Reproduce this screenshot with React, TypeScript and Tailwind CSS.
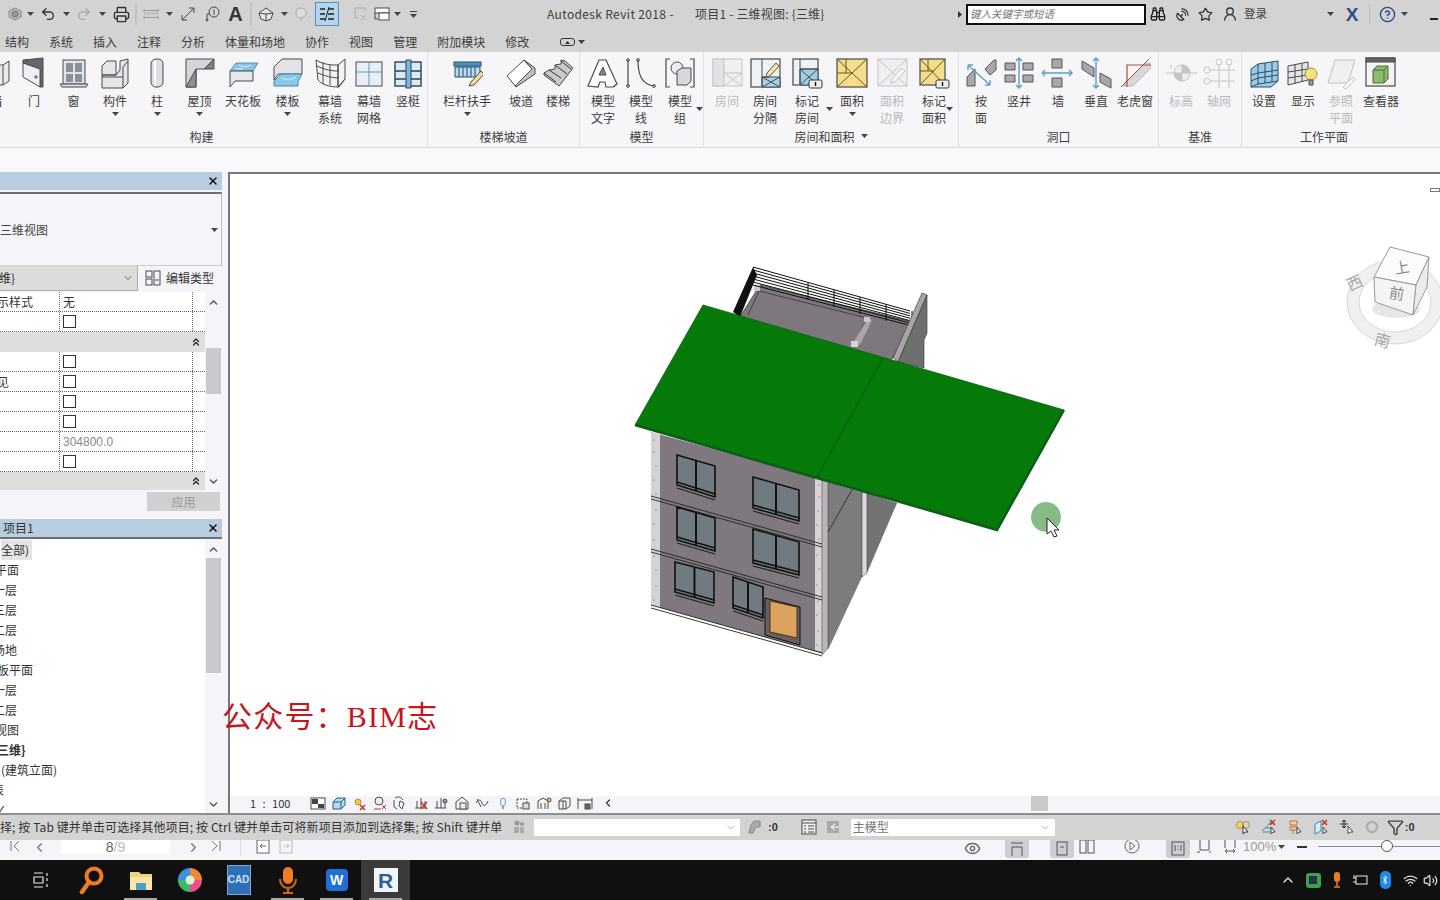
import type { ReactNode } from "react";
import {
  Undo2, Redo2, Printer, Binoculars, SatelliteDish, Star, UserRound, CircleHelp, X, ChevronUp, ChevronDown,
  ChevronLeft, ChevronRight, Eye, Funnel, Wifi, Volume2, Bluetooth, ChevronsUp,
} from "lucide-react";

const S = ({ children }: { children: ReactNode }) => (
  <svg width="32" height="32" viewBox="0 0 32 32" fill="none" stroke="#4a4a4a" strokeWidth="1">
    {children}
  </svg>
);

const Sm = ({ children, w = 16 }: { children: ReactNode; w?: number }) => (
  <svg width={w} height="16" viewBox={`0 0 ${w} 16`} fill="none" stroke="#4a4a4a" strokeWidth="1">
    {children}
  </svg>
);

const Caret = () => (
  <svg width="7" height="4" viewBox="0 0 7 4" className="shrink-0">
    <path d="M0 0h7L3.5 4z" fill="#444" />
  </svg>
);

const Hatch = ({ d }: { d: string }) => <path d={d} fill="#a9a9ad" stroke="#555" />;
const Arrow = ({ d }: { d: string }) => <path d={d} stroke="#5b9fc4" strokeWidth="1.4" />;
const Pencil = () => <path d="M18 16l9-10 3 3-9 10-4 1z" fill="#f5e6a8" stroke="#555" />;
const Badge = () => (
  <g>
    <rect x="18" y="23" width="13" height="8" rx="1.5" fill="#eee" stroke="#333" />
    <path d="M24.5 25v4" stroke="#111" strokeWidth="1.4" />
  </g>
);

const icons: Record<string, ReactNode> = {
  wall: <S><path d="M4 8h19l6-4v20l-6 4H4z" fill="#e9e9ed" /><path d="M23 8v20" /></S>,
  door: <S><path d="M5 3l20-2v29h-3V12L5 6z" fill="#66666c" /><path d="M5 6l17 6v18L5 20z" fill="#eef0f5" /><circle cx="18" cy="20" r="1.2" /></S>,
  window: <S><rect x="5" y="3" width="22" height="24" fill="#e4e4e8" /><path d="M8 6h7v9H8zM17 6h7v9h-7zM8 17h7v8H8zM17 17h7v8h-7z" fill="#8a8f9c" stroke="none" /><path d="M2 27h28l-2 3H4z" fill="#ddd" /></S>,
  component: <S><path d="M3 9l5-5h9v14H3zM3 18h14l4-5V4l8-2v24l-5 5H3z" fill="#e6e6ea" /><path d="M24 10v21M3 20h21M24 10l5-6" /></S>,
  column: <S><rect x="10" y="2" width="12" height="28" rx="5" fill="#dedfe4" /><path d="M14 3v26" stroke="#fff" strokeWidth="2" /></S>,
  roof: <S><path d="M2 2h28L20 12H12v18H2z" fill="#d5d5da" /><path d="M30 2v10H20z" fill="#80808a" /><path d="M2 30l10-18v18z" fill="#8e8e97" /></S>,
  ceiling: <S><path d="M9 6h22l-5 8H3z" fill="#87c4e6" stroke="#5b92b4" /><path d="M3 14v16l5-6h18V14z" fill="#e7e7ea" /><path d="M12 8l6 2 6-2M8 12h8" stroke="#d5effb" /></S>,
  floor: <S><path d="M2 10l8-8h20v15H6l-4 6z" fill="#e4e4e8" /><path d="M2 24l7-7h21l-4 8 0 4H2z" fill="#8dc7e8" stroke="#3e8bb8" /><path d="M9 21l8 2 7-3" stroke="#d8f2ff" /></S>,
  curtain: <S><path d="M2 3c8 5 16 5 22 5l7-6v20l-6 8C16 30 8 28 4 23z" fill="#f2f3f5" /><path d="M3 9c8 4 15 5 22 5M4 16c7 3 14 5 21 5M9 5v22M16 8v20M24 8v22M24 8v22l7-8" /></S>,
  grid: <S><rect x="3" y="5" width="26" height="24" fill="#e6eff6" /><path d="M16 5v24M3 15h26" stroke="#6f93ad" /></S>,
  mullion: <S><rect x="3" y="5" width="26" height="24" fill="#dbe9f3" stroke="#26455c" strokeWidth="1.4" /><path d="M3 14h26M3 22h26" stroke="#26455c" strokeWidth="1.4" /><path d="M14 3h5v28h-5z" fill="#7fb6d6" stroke="#26455c" /></S>,
  rail: <S><rect x="3" y="5" width="27" height="4" fill="#4f93c2" stroke="#264d6b" /><path d="M4 10h25v10H4z" fill="#b9daef" stroke="#264d6b" /><path d="M8 10v10M12 10v10M16 10v10M20 10v10M24 10v10" stroke="#264d6b" /><path d="M20 25l10-11 3 3-10 11-5 1z" fill="#f3dc8e" /></S>,
  ramp: <S><path d="M2 19L19 3l8 9-16 18z" fill="#fff" /><path d="M19 3l11 8v6L11 30l-1-1 17-17z" fill="#bfbfc4" /></S>,
  stair: <S><path d="M2 16l5-3 6-1 0-4 6-1 0-4 4 1 8 7-14 18L2 18z" fill="#c9c9ce" /><path d="M2 16l12 9M7 13l12 8M13 8l12 9M19 4l10 8" stroke="#333" /></S>,
  text: <S><path d="M1 29L12 3h7l11 24-4 3H19l-1-5h-5l-2 5z" fill="#fff" strokeWidth="1.2" /><path d="M12 18h7l-3-8z" fill="#888" /><path d="M26 30l4-3" /></S>,
  line: <S><path d="M3 3v26M13 3c0 14 3 24 16 26" strokeWidth="1.2" /><circle cx="3" cy="3" r="1.4" /><circle cx="3" cy="29" r="1.4" /><circle cx="13" cy="3" r="1.4" /><circle cx="29" cy="29" r="1.4" /></S>,
  group: <S><path d="M6 2H2v28h4M26 2h4v28h-4" strokeWidth="1.2" /><circle cx="13" cy="11" r="6" fill="#eee" /><path d="M13 14l5-3h9v13l-4 4H13z" fill="#d8d8dc" /></S>,
  room: <S><g stroke="#c4c4c8"><rect x="2" y="2" width="29" height="27" fill="#f0f0f2" /><path d="M13 8v8h18M13 16l18 13M31 16L13 29" /><path d="M2 2h11v27H2z" fill="#e2e2e6" /></g></S>,
  sep: <S><rect x="2" y="2" width="29" height="28" fill="#eef1f6" strokeWidth="1.2" /><path d="M13 20h18v10H13z" fill="#a9d3ea" /><path d="M13 2v28M13 20h7M13 30l18-10M13 20l18 10" /><Pencil /></S>,
  tagroom: <S><rect x="2" y="2" width="25" height="26" fill="#eef1f6" strokeWidth="1.2" /><path d="M9 12h18v16H9z" fill="#9fcde6" /><path d="M9 2v26M9 12h18M9 28l18-16M9 12l18 16" /><Badge /></S>,
  area: <S><rect x="1" y="2" width="30" height="28" fill="#f4de8c" strokeWidth="1.2" /><path d="M1 2l30 28M31 2L1 30M10 2v14M1 16h16" stroke="#6a5520" /></S>,
  areab: <S><g stroke="#c4c4c8"><rect x="2" y="2" width="29" height="27" fill="#efefef" /><path d="M2 2l29 27M31 2L2 29" /><path d="M16 22l10-11 3 3-10 11-4 1z" fill="#f6f6f6" /></g></S>,
  tagarea: <S><rect x="2" y="2" width="25" height="26" fill="#f4de8c" strokeWidth="1.2" /><path d="M2 2l25 26M27 2L2 28M10 2v12M2 14h14" stroke="#6a5520" /><Badge /></S>,
  byface: <S><Hatch d="M2 29V20l8-8v17zM20 12l9-9h2v10l-6 5z" /><Arrow d="M3 8l22 20M3 8v5M3 8h5M25 28v-5M25 28h-5" /></S>,
  shaft: <S><Hatch d="M2 6h10v7H2zM20 6h10v7H20zM2 18h10v7H2zM20 18h10v7H20z" /><Arrow d="M16 1v30M13 4l3-3 3 3M13 28l3 3 3-3" /></S>,
  wallop: <S><Hatch d="M10 2h10v9H10zM10 21h10v9H10z" /><Arrow d="M0 16h30M3 13l-3 3 3 3M27 13l3 3-3 3" /></S>,
  vert: <S><Hatch d="M2 4l12 7v9L2 12zM20 16l11 6v9l-11-6z" /><Arrow d="M16 1v30M13 4l3-3 3 3M13 28l3 3 3-3" /></S>,
  dormer: <S><path d="M4 29L26 6h6v5L14 29z" fill="#d8d8dc" stroke="#bbb" /><path d="M8 30V8h24" stroke="#a9533e" strokeWidth="1.2" /><path d="M2 30L30 2" stroke="#a9533e" /></S>,
  level: <S><g stroke="#c4c4c8"><path d="M1 16h31M6 8v4" /><circle cx="17" cy="16" r="8" fill="#f0f0f0" /><path d="M17 8a8 8 0 0 1 8 8h-8zM17 16h-8a8 8 0 0 0 8 8z" fill="#c4c4c8" /></g></S>,
  axis: <S><g stroke="#c4c4c8"><circle cx="16" cy="5" r="3" /><circle cx="26" cy="5" r="3" /><circle cx="4" cy="13" r="3" /><circle cx="4" cy="24" r="3" /><path d="M16 8v23M26 8v23M7 13h25M7 24h25" /></g></S>,
  set: <S><path d="M3 12l7-5 20-3v20l-7 6H3z" fill="#9ccbe8" stroke="#2d4f68" /><path d="M10 7v20l-7 3M10 27l20-3M17 6v20M24 5v20M3 18l7-2 20-3M3 24l7-3 20-3" stroke="#2d4f68" /></S>,
  show: <S><path d="M1 9l20-4v18L1 28z" fill="#e6e6e6" /><path d="M8 8v19M15 7v18M1 15l20-3M1 21l20-3" /><circle cx="24" cy="17" r="6" fill="#f6e27a" stroke="#a88f32" /><path d="M22 23h4v5h-4z" fill="#999" /></S>,
  ref: <S><g stroke="#c4c4c8"><path d="M3 26L10 3h20l-7 23z" fill="#f0f0f2" /><path d="M18 30l10-10 2 3-9 9z" fill="#fafafa" /></g></S>,
  viewer: <S><rect x="1" y="1" width="29" height="28" fill="#f5f5f7" strokeWidth="1.2" /><path d="M1 1h29v4H1z" fill="#666" /><path d="M8 13l4-4h11v13l-4 4H8z" fill="#8dbb6c" stroke="#4c6d35" /><path d="M19 13v13M8 13h11l4-4" stroke="#4c6d35" /></S>,
};

type ToolT = { w: number; i: string; l?: string[]; arrow?: boolean; off?: boolean; side?: boolean };
type GroupT = { t: string; caret?: boolean; tools: ToolT[]; cls: string; lab?: string };

const groups: GroupT[] = [
  { t: "构建", cls: "w-[428px]", lab: "pr-[24px]", tools: [
    { w: 15, i: "wall", l: ["墙"] }, { w: 38, i: "door", l: ["门"] }, { w: 41, i: "window", l: ["窗"] },
    { w: 42, i: "component", l: ["构件"], arrow: true }, { w: 42, i: "column", l: ["柱"], arrow: true },
    { w: 43, i: "roof", l: ["屋顶"], arrow: true }, { w: 44, i: "ceiling", l: ["天花板"] },
    { w: 45, i: "floor", l: ["楼板"], arrow: true }, { w: 40, i: "curtain", l: ["幕墙", "系统"] },
    { w: 38, i: "grid", l: ["幕墙", "网格"] }, { w: 40, i: "mullion", l: ["竖梃"] },
  ] },
  { t: "楼梯坡道", cls: "w-[152px]", tools: [
    { w: 78, i: "rail", l: ["栏杆扶手"], arrow: true }, { w: 30, i: "ramp", l: ["坡道"] }, { w: 44, i: "stair", l: ["楼梯"] },
  ] },
  { t: "模型", cls: "w-[124px]", tools: [
    { w: 46, i: "text", l: ["模型", "文字"] }, { w: 30, i: "line", l: ["模型", "线"] }, { w: 48, i: "group", l: ["模型", "组"], side: true },
  ] },
  { t: "房间和面积", caret: true, cls: "w-[255px]", tools: [
    { w: 46, i: "room", l: ["房间"], off: true }, { w: 30, i: "sep", l: ["房间", "分隔"] },
    { w: 54, i: "tagroom", l: ["标记", "房间"], side: true }, { w: 36, i: "area", l: ["面积"], arrow: true },
    { w: 44, i: "areab", l: ["面积", "边界"], off: true }, { w: 40, i: "tagarea", l: ["标记", "面积"], side: true },
  ] },
  { t: "洞口", cls: "w-[200px]", tools: [
    { w: 44, i: "byface", l: ["按", "面"] }, { w: 32, i: "shaft", l: ["竖井"] }, { w: 46, i: "wallop", l: ["墙"] },
    { w: 30, i: "vert", l: ["垂直"] }, { w: 48, i: "dormer", l: ["老虎窗"] },
  ] },
  { t: "基准", cls: "w-[83px]", tools: [
    { w: 44, i: "level", l: ["标高"], off: true }, { w: 32, i: "axis", l: ["轴网"], off: true },
  ] },
  { t: "工作平面", cls: "w-[198px]", lab: "pr-[34px]", tools: [
    { w: 44, i: "set", l: ["设置"] }, { w: 34, i: "show", l: ["显示"] },
    { w: 42, i: "ref", l: ["参照", "平面"], off: true }, { w: 38, i: "viewer", l: ["查看器"] },
  ] },
];

const Tool = ({ t }: { t: ToolT }) => (
  <div className="relative shrink-0 flex flex-col items-center" style={{ width: t.w }}>
    {t.i === "wall" ? (
      <div className="w-[15px] overflow-hidden">
        <div className="-ml-[23px] w-[38px] flex flex-col items-center">
          {icons.wall}
          <div className="mt-[3px] leading-[17px]">墙</div>
        </div>
      </div>
    ) : (
      <>
        {icons[t.i]}
        <div className={`mt-[3px] text-center leading-[17px] whitespace-nowrap ${t.off ? "text-[#b9b9bd]" : "text-[#3d3d3d]"}`}>
          {t.l?.map((x) => <div key={x}>{x}</div>)}
        </div>
      </>
    )}
    {t.arrow && <div className="mt-[3px] flex justify-center"><Caret /></div>}
    {t.side && <div className="absolute right-[1px] top-[50px]"><Caret /></div>}
  </div>
);

const Ribbon = () => (
  <div className="flex h-[96px] bg-[#f6f5f8] border-b border-[#dcdcdc]">
    {groups.map((g, n) => (
      <div key={g.t} className={`${g.cls} shrink-0 flex flex-col justify-between ${n < 6 ? "border-r border-[#e0e0e2]" : ""}`}>
        <div className="flex pt-[5px]">
          {g.tools.map((t) => <Tool key={t.i} t={t} />)}
        </div>
        <div className={`h-[18px] mb-[2px] flex items-center justify-center gap-[6px] leading-[17px] text-[#3d3d3d] ${g.lab ?? ""}`}>
          {g.t}
          {g.caret && <Caret />}
        </div>
      </div>
    ))}
  </div>
);

const Slot = ({ w, children }: { w: number; children?: ReactNode }) => (
  <div className="shrink-0 flex items-center justify-center" style={{ width: w }}>{children}</div>
);

const TitleBar = () => (
  <div className="h-[26px] flex items-center bg-[#d3d3d3] pl-[5px] pt-[2px] text-[#3e3e3e]">
    <Slot w={20}><Sm><path d="M8 2l6 3v6l-6 3-6-3V5z" fill="#bbb" stroke="#888" /><circle cx="8" cy="8" r="3" fill="#999" stroke="#777" /></Sm></Slot>
    <Slot w={10}><Caret /></Slot>
    <Slot w={26}><Undo2 size={16} color="#333" /></Slot>
    <Slot w={10}><Caret /></Slot>
    <Slot w={26}><Redo2 size={16} color="#aaa" /></Slot>
    <Slot w={10}><Caret /></Slot>
    <Slot w={28}><Printer size={17} color="#333" /></Slot>
    <div className="w-[2px] h-[22px] bg-[#c2c2c2]" />
    <Slot w={28}><Sm><path d="M1 3v3M15 3v3M1 4.5h14M1 10v3M15 10v3M1 11.5h14" stroke="#999" /><path d="M1 7.5h14" stroke="#bbb" strokeWidth="2" /></Sm></Slot>
    <Slot w={8}><Caret /></Slot>
    <Slot w={30}><Sm><path d="M2 14L14 2M9 2h5v5M2 9v5h5" /></Sm></Slot>
    <Slot w={18}><Sm><circle cx="10" cy="6" r="5" /><path d="M10 3.500v5" /><path d="M3 14V8h3" /><circle cx="3" cy="14" r="1" /></Sm></Slot>
    <Slot w={29}><span className="font-['Liberation_Sans',sans-serif] text-[20px] font-bold leading-none text-[#333]">A</span></Slot>
    <div className="w-[2px] h-[22px] bg-[#c2c2c2]" />
    <Slot w={28}><Sm><path d="M1 7l7-5 7 5-2 6-5 2-5-2z" fill="#e5e5e5" /><path d="M8 8v7M1 7l7 1 7-1" /></Sm></Slot>
    <Slot w={8}><Caret /></Slot>
    <Slot w={26}><Sm><circle cx="8" cy="7" r="5" fill="#ddd" stroke="#aaa" /><path d="M8 12v3" stroke="#aaa" /></Sm></Slot>
    <Slot w={26}>
      <div className="w-[24px] h-[24px] bg-[#b4d4ee] border border-[#5b8fb8] flex items-center justify-center">
        <Sm><path d="M1 3h5M1 8h5M1 13h5M9 3h6M9 8h6M9 13h6" strokeWidth="1.6" stroke="#222" /><path d="M10 1L6 15" stroke="#222" /></Sm>
      </div>
    </Slot>
    <div className="w-[10px]" />
    <Slot w={20}><Sm><path d="M3 2h10v3M3 2v10h4M9 9l5 5M14 9l-5 5" stroke="#aaa" /></Sm></Slot>
    <Slot w={24}><Sm><rect x="1" y="2" width="14" height="5" fill="#fff" /><rect x="5" y="7" width="10" height="7" fill="#fff" /><path d="M1 7v6h3" /></Sm></Slot>
    <Slot w={6}><Caret /></Slot>
    <Slot w={26}><div className="flex flex-col items-center gap-[2px]"><div className="w-[7px] h-[1px] bg-[#444]" /><Caret /></div></Slot>
    <div className="w-[121px] shrink-0" />
    <div className="w-[148px] shrink-0 text-[12px] tracking-[0.35px] whitespace-nowrap">Autodesk Revit 2018 -</div>
    <div className="w-[259px] shrink-0 whitespace-nowrap text-[12px] tracking-[0.2px]">项目1 - 三维视图: {"{三维}"}</div>
    <Slot w={12}><svg width="4" height="7" viewBox="0 0 4 7"><path d="M0 0l4 3.500L0 7z" fill="#333" /></svg></Slot>
    <div className="w-[180px] h-[21px] shrink-0 bg-white border-2 border-[#111] flex items-center pl-[2px] text-[10.5px] italic text-[#777]">键入关键字或短语</div>
    <Slot w={24}><Binoculars size={16} color="#222" /></Slot>
    <Slot w={24}><SatelliteDish size={15} color="#333" /></Slot>
    <Slot w={22}><Star size={15} color="#333" /></Slot>
    <Slot w={28}><UserRound size={16} color="#333" /></Slot>
    <span className="w-[24px] shrink-0 text-[11.5px]">登录</span>
    <div className="w-[57px] shrink-0" />
    <Slot w={10}><Caret /></Slot>
    <div className="w-[5px] shrink-0" />
    <Slot w={24}><span className="font-['Liberation_Sans',sans-serif] text-[19px] font-bold leading-none text-[#2f4d88]">X</span></Slot>
    <div className="w-[5px] shrink-0" />
    <div className="w-[1px] h-[20px] bg-[#bdbdbd]" />
    <div className="w-[5px] shrink-0" />
    <Slot w={24}><CircleHelp size={17} color="#2f4d88" /></Slot>
    <Slot w={10}><Caret /></Slot>
    <div className="w-[21px] shrink-0" />
    <div className="w-[8px] h-[2px] bg-[#222] mt-[10px]" />
  </div>
);

const Tabs = () => (
  <div className="h-[26px] flex items-center gap-[20px] bg-[#d3d3d3] pl-[5px] pt-[6px] text-[#3e3e3e] leading-none">
    {["结构", "系统", "插入", "注释", "分析", "体量和场地", "协作", "视图", "管理", "附加模块", "修改"].map((t) => <span key={t}>{t}</span>)}
    <div className="flex items-center gap-[3px] ml-[11px]">
      <div className="w-[15px] h-[8px] rounded-[3px] border border-[#333] flex items-center justify-center">
        <svg width="5" height="3" viewBox="0 0 5 3"><path d="M0 3h5L2.500 0z" fill="#333" /></svg>
      </div>
      <Caret />
    </div>
  </div>
);

const Check = () => <div className="w-[13px] h-[13px] border border-[#333] bg-white" />;

const PropRow = ({ label, children, cls = "" }: { label?: string; children?: ReactNode; cls?: string }) => (
  <div className="h-[20px] flex border-b border-dotted border-[#666] bg-white">
    <div className="w-[60px] border-r border-dotted border-[#666] overflow-hidden whitespace-nowrap flex items-center">
      <span className={cls}>{label}</span>
    </div>
    <div className="w-[133px] pl-[3px] flex items-center border-r border-dotted border-[#666]">{children}</div>
  </div>
);

const PropHead = ({ h = 20 }: { h?: number }) => (
  <div className="flex items-center justify-end bg-[#dedede] pr-[3px]" style={{ height: h }}>
    <ChevronsUp size={12} color="#222" strokeWidth={2.5} />
  </div>
);

const Properties = () => (
  <div className="h-[347px] flex flex-col bg-[#f5f4f8] text-[#333]">
    <div className="h-[18px] bg-[#b9cde0] flex justify-end items-center pr-[3px]"><X size={12} color="#111" strokeWidth={3} /></div>
    <div className="h-[74px] mt-[2px] border-t-2 border-r border-b border-t-[#707070] border-r-[#bbb] border-b-[#ccc] flex items-center justify-between pr-[3px] text-[#444]">
      三维视图
      <Caret />
    </div>
    <div className="h-[26px] flex">
      <div className="w-[138px] h-[25px] bg-[#dcdcdc] border-r border-b border-[#aaa] flex items-center justify-between pr-[3px]">
        <span className="-ml-[1px]">{"维}"}</span>
        <ChevronDown size={12} color="#666" />
      </div>
      <div className="flex items-center pl-[7px] pb-[3px] gap-[5px] whitespace-nowrap">
        <Sm><rect x="1" y="1" width="6" height="6" /><rect x="1" y="9" width="6" height="6" /><rect x="9" y="1" width="6" height="14" /><path d="M10 10h4" /></Sm>
        编辑类型
      </div>
    </div>
    <div className="h-[198px] flex">
      <div className="w-[205px]">
        <PropRow label="示样式" cls="-ml-[3px]"><span className="leading-none">无</span></PropRow>
        <PropRow><Check /></PropRow>
        <PropHead />
        <PropRow><Check /></PropRow>
        <PropRow label="见" cls="-ml-[3px]"><Check /></PropRow>
        <PropRow><Check /></PropRow>
        <PropRow><Check /></PropRow>
        <PropRow><span className="text-[#8a8a8a] font-['Liberation_Sans',sans-serif]">304800.0</span></PropRow>
        <PropRow><Check /></PropRow>
        <PropHead h={18} />
      </div>
      <div className="w-[17px] flex flex-col items-center">
        <ChevronUp size={13} color="#444" strokeWidth={2.5} className="mt-[4px]" />
        <div className="w-[15px] h-[46px] bg-[#c9c8cc] mt-[39px]" />
        <div className="flex-1" />
        <ChevronDown size={13} color="#444" strokeWidth={2.5} className="mb-[2px]" />
      </div>
    </div>
    <div className="h-[29px] flex justify-end pr-[2px] pt-[2px]">
      <div className="w-[73px] h-[19px] bg-[#d0d0d2] text-[#999] flex items-center justify-center">应用</div>
    </div>
  </div>
);

const treeRows: [string, string][] = [
  ["全部)", "ml-[1px] bg-[#e4e4e6] pr-[3px]"], ["平面", "-ml-[5px]"], ["一层", "-ml-[7px]"], ["三层", "-ml-[7px]"], ["二层", "-ml-[7px]"],
  ["场地", "-ml-[7px]"], ["板平面", "-ml-[3px]"], ["一层", "-ml-[7px]"], ["二层", "-ml-[7px]"], ["视图", "-ml-[5px]"],
  ["三维}", "-ml-[3px] font-bold"], ["(建筑立面)", "ml-[1px]"], ["表", "-ml-[8px]"], ["✓", "-ml-[4px]"],
];

const Browser = () => (
  <div className="h-[294px] flex flex-col bg-[#f5f4f8] text-[#333]">
    <div className="h-[18px] bg-[#b9cde0] flex items-center justify-between pl-[3px] pr-[3px] shrink-0">
      项目1
      <X size={12} color="#111" strokeWidth={3} />
    </div>
    <div className="h-[3px] border-t-2 border-[#707070] shrink-0" />
    <div className="flex-1 flex min-h-0">
      <div className="w-[205px] bg-white overflow-hidden">
        {treeRows.map(([t, c], n) => (
          <div key={n} className="h-[20px] flex items-center">
            <span className={`leading-[20px] whitespace-nowrap ${c}`}>{t}</span>
          </div>
        ))}
      </div>
      <div className="w-[17px] flex flex-col items-center">
        <ChevronUp size={13} color="#444" strokeWidth={2.5} className="mt-[3px]" />
        <div className="w-[15px] h-[115px] bg-[#c9c8cc] mt-[2px]" />
        <div className="flex-1" />
        <ChevronDown size={13} color="#444" strokeWidth={2.5} className="mb-[2px]" />
      </div>
    </div>
  </div>
);

const Win = ({ p, mid }: { p: number[][]; mid?: number }) => {
  const [a, b, c, d] = p;
  const t = mid ?? 0.5;
  const top = [a[0] + (b[0] - a[0]) * t, a[1] + (b[1] - a[1]) * t];
  const bot = [d[0] + (c[0] - d[0]) * t, d[1] + (c[1] - d[1]) * t];
  return (
    <g>
      <polygon points={p.map((q) => q.join(",")).join(" ")} fill="#6f7b80" stroke="#111" strokeWidth="1.6" />
      <line x1={top[0]} y1={top[1]} x2={bot[0]} y2={bot[1]} stroke="#111" strokeWidth="2" />
      <line x1={d[0]} y1={d[1] - 3} x2={c[0]} y2={c[1] - 3} stroke="#111" strokeWidth="1.6" />
      <line x1={d[0]} y1={d[1] + 3} x2={c[0]} y2={c[1] + 3} stroke="#222" strokeWidth="1.2" />
    </g>
  );
};

const dotsY = [440, 452, 466, 480, 494, 510, 524, 540, 556, 570, 586, 600];

const Building = () => (
  <svg className="absolute left-[400px] top-[86px]" width="480" height="400" viewBox="630 260 480 400">
    <polygon points="740,317 760,285 913,322 890,362 860,352" fill="#7e787e" stroke="#333" strokeWidth=".8" />
    <path d="M748 315l11-24 108 27M867 318l-13 26" stroke="#333" strokeWidth=".8" fill="none" />
    <polygon points="853,343 868,318 872,320 860,345" fill="#a9a5a9" />
    <rect x="754" y="285" width="6" height="6" fill="#c8c6c8" />
    <rect x="864" y="317" width="6" height="5" fill="#c8c6c8" />
    <rect x="851" y="341" width="7" height="6" fill="#d6d4d6" />
    {[0, 3, 6, 9, 12, 15, 18].map((n) => (
      <line key={n} x1="753" y1={267 + n} x2="910" y2={311 + n * 0.8} stroke="#111" strokeWidth="1" />
    ))}
    {[0, 1, 2, 3, 4].map((n) => (
      <line key={n} x1={808 + n * 26} y1={283 + n * 7} x2={808 + n * 26} y2={300 + n * 7} stroke="#111" strokeWidth="1" />
    ))}
    <polygon points="733,312 753,267 757,275 740,317" fill="#111" />
    <polygon points="893,358 922,293 927,295 898,362" fill="#a8a4a8" stroke="#333" strokeWidth=".6" />
    <polygon points="927,295 927,333 924,340 924,368 898,362" fill="#6f6f6f" stroke="#333" strokeWidth=".6" />
    <polygon points="827,482 897,503 862,577 828,650" fill="#7c7c7c" />
    <polygon points="867,493 897,503 867,573" fill="#737373" />
    <polygon points="862,492 867,493 867,573 862,577" fill="#dad8da" stroke="#333" strokeWidth=".5" />
    <line x1="828" y1="532" x2="853" y2="488" stroke="#222" strokeWidth=".8" />
    <polygon points="651,432 817,477 822,653 651,605" fill="#7f797f" />
    <polygon points="651,432 660,434 660,608 651,605" fill="#d5d2d5" />
    <polygon points="815,477 822,479 822,652 815,650" fill="#d6d3d6" />
    <polygon points="822,479 828,481 828,648 822,655" fill="#b9b6b9" stroke="#333" strokeWidth=".5" />
    {dotsY.map((y) => <circle key={y} cx={654 + (y % 4)} cy={y} r=".6" fill="#444" />)}
    {dotsY.map((y) => <circle key={y} cx={817 + (y % 3)} cy={y + 45} r=".6" fill="#444" />)}
    <path d="M651 496l171 48M651 499l171 48M651 549l171 48M651 552l171 48M651 605l171 48M651 608l171 48" stroke="#222" strokeWidth=".9" />
    <Win p={[[677, 455], [715, 466], [715, 497], [677, 485]]} />
    <Win p={[[753, 477], [799, 490], [799, 521], [753, 508]]} />
    <Win p={[[677, 507], [715, 518], [715, 551], [677, 540]]} />
    <Win p={[[753, 529], [799, 542], [799, 575], [753, 563]]} />
    <Win p={[[675, 562], [714, 572], [714, 603], [675, 592]]} />
    <Win p={[[733, 577], [763, 587], [763, 618], [733, 608]]} />
    <polygon points="765,598 800,607 800,645 765,635" fill="#6a5f5f" stroke="#111" />
    <polygon points="770,601 797,607 797,638 770,632" fill="#dca35f" stroke="#3a1c10" strokeWidth=".8" />
    <polygon points="635,425 703,305 1064,410 997,530" fill="#067a08" />
    <path d="M635 425l182 53 180 52 67-120" stroke="#0d5a1c" strokeWidth="2.4" fill="none" />
    <path d="M635 425L703 305l361 105" stroke="#0d5f16" strokeWidth=".8" fill="none" />
    <line x1="883" y1="358" x2="817" y2="477" stroke="#064c10" strokeWidth=".9" />
    <circle cx="1046" cy="517" r="15" fill="#86bb86" />
    <path d="M1047 518v16l4-3 3 6 3-1-3-6h5z" fill="#fff" stroke="#222" strokeWidth="1" />
  </svg>
);

const Cube = () => (
  <svg className="absolute right-0 top-[64px]" width="100" height="115" viewBox="1340 238 100 115">
    <ellipse cx="1395" cy="302" rx="42" ry="36" fill="none" stroke="#f0f0f0" strokeWidth="12" />
    <ellipse cx="1395" cy="302" rx="48" ry="42" fill="none" stroke="#d8d8d8" strokeWidth="1" />
    <ellipse cx="1395" cy="302" rx="36" ry="30" fill="none" stroke="#d8d8d8" strokeWidth="1" />
    <ellipse cx="1396" cy="309" rx="24" ry="9" fill="#e6e6e6" />
    <polygon points="1390,247 1429,257 1416,285 1374,277" fill="#fbfbfb" stroke="#9a9a9a" />
    <polygon points="1374,277 1416,285 1413,315 1375,302" fill="#f4f4f4" stroke="#9a9a9a" />
    <polygon points="1429,257 1416,285 1413,315 1427,287" fill="#ececec" stroke="#9a9a9a" />
    <text x="1396" y="299" fontSize="15" fill="#8c8c8c" textAnchor="middle" transform="rotate(8 1396 299)">前</text>
    <text x="1403" y="273" fontSize="15" fill="#888" textAnchor="middle" transform="rotate(-10 1403 273)">上</text>
    <text x="1357" y="288" fontSize="16" fill="#a8a8a8" textAnchor="middle" transform="rotate(-25 1357 288)">西</text>
    <text x="1381" y="346" fontSize="16" fill="#a8a8a8" textAnchor="middle" transform="rotate(15 1381 346)">南</text>
  </svg>
);

const ViewBar = () => (
  <div className="h-[17px] bg-[#f5f4f8] flex items-center pb-[3px] text-[11px] text-[#333]">
    <span className="w-[80px] pl-[20px] shrink-0 whitespace-nowrap [word-spacing:4px]">1 : 100</span>
    <div className="flex items-center gap-[4.5px]">
      <Sm><rect x="1" y="3" width="14" height="11" fill="#fff" /><path d="M2 4h6v5H2zM8 9h6v4H8z" fill="#444" stroke="none" /></Sm>
      <Sm><path d="M2 7l4-4h8v7l-4 4H2z" fill="#b8d8ef" stroke="#285e85" /><path d="M2 7h8v7M10 7l4-4" stroke="#285e85" /></Sm>
      <Sm><circle cx="7" cy="7" r="3" fill="#f2c94c" stroke="#b8902b" /><path d="M9 10l5 5M14 10l-5 5" stroke="#c0392b" strokeWidth="1.5" /></Sm>
      <Sm><circle cx="7" cy="6" r="4" fill="#eee" /><path d="M2 14h7M10 10l4 4M14 10l-4 4" stroke="#c0392b" /></Sm>
      <Sm><path d="M3 3c3-2 6-1 8 2M2 5v7l3 2M8 6l4 2-2 6-3-3z" /></Sm>
      <Sm><path d="M2 13h11M4 13V6M8 13V3M12 13V6" /><path d="M8 7l6 7M14 7l-6 7" stroke="#c0392b" strokeWidth="1.5" /></Sm>
      <Sm><path d="M2 13h11M4 13V6M8 13V3M12 13V6" /><circle cx="12" cy="6" r="2" fill="#6fa8d0" /></Sm>
      <Sm><path d="M2 7l6-5 6 5v7H2z" /><rect x="6" y="8" width="6" height="6" fill="#eee" /></Sm>
      <Sm><path d="M2 8c2-4 5-4 6 0s4 3 6-2M3 4l4 8" /></Sm>
      <Sm><ellipse cx="8" cy="7" rx="2.5" ry="4" stroke="#5b9fc4" /><path d="M8 11v3" /></Sm>
      <Sm><path d="M2 4h10v9H2z" strokeDasharray="2 1" /><rect x="8" y="8" width="6" height="6" fill="#ddd" /></Sm>
      <Sm><path d="M2 14V6l5-3 5 3v8M5 14V8M9 14V8" /><circle cx="13" cy="5" r="2" fill="#f2c94c" /></Sm>
      <Sm><path d="M3 6l4-3h7v8l-4 3H3z" /><path d="M3 6h7v8M7 6v8" /></Sm>
      <Sm><path d="M1 3v11M15 3v11M1 5h14" /><rect x="8" y="9" width="5" height="5" fill="#666" /></Sm>
    </div>
    <ChevronLeft size={12} color="#333" strokeWidth={2.5} className="ml-[9px] shrink-0" />
    <div className="w-[417px] shrink-0" />
    <div className="w-[17px] h-[15px] bg-[#c9c8cb]" />
  </div>
);

const Picker = ({ w, text }: { w: number; text?: string }) => (
  <div className="h-[17px] bg-white flex items-center justify-between pl-[2px] pr-[4px] text-[#777] shrink-0" style={{ width: w }}>
    <span className="text-[12px] leading-none">{text}</span>
    <ChevronDown size={11} color="#aaa" />
  </div>
);

const StatusBar = () => (
  <div className="h-[27px] bg-[#d3d3d3] border-t-2 border-[#8f8f8f] flex items-center pb-[1px] text-[#333]">
    <div className="w-[510px] shrink-0 overflow-hidden whitespace-nowrap text-[12px] tracking-[0.1px]">择; 按 Tab 键并单击可选择其他项目; 按 Ctrl 键并单击可将新项目添加到选择集; 按 Shift 键并单</div>
    <Slot w={18}><Sm><circle cx="6" cy="4" r="2.5" fill="#999" stroke="none" /><circle cx="11" cy="5" r="2" fill="#999" stroke="none" /><path d="M3 14V8h5v6M9 14V8h4v6" fill="#aaa" stroke="none" /></Sm></Slot>
    <div className="w-[6px]" />
    <Picker w={206} />
    <Slot w={28}><Sm><path d="M8 2h6v6h-4l-3 6H3l2-8z" fill="#aaa" stroke="#888" /></Sm></Slot>
    <span className="text-[11px] font-bold font-['Liberation_Sans',sans-serif]">:0</span>
    <div className="w-[22px]" />
    <Slot w={18}><Sm><rect x="1" y="1" width="14" height="14" fill="#eee" /><path d="M1 4h14M3 7h2M7 7h6M3 10h2M7 10h6M3 13h2M7 13h6" /></Sm></Slot>
    <div className="w-[6px]" />
    <Slot w={18}><Sm><path d="M2 2h12v12H2z" fill="#a9a9a9" stroke="none" /><path d="M6 8h8M10 5l-4 3 4 3" stroke="#fff" /></Sm></Slot>
    <div className="w-[9px]" />
    <Picker w={204} text="主模型" />
    <div className="w-[175px]" />
    <Slot w={26}><Sm><circle cx="5" cy="6" r="3.5" stroke="#b8902b" fill="#f2d46b" /><circle cx="11" cy="6" r="3.5" stroke="#b8902b" /><path d="M8 7v8l2-2h3z" fill="#fff" stroke="#333" /></Sm></Slot>
    <Slot w={26}><Sm><path d="M1 12l9-9M2 13h8M5 9h7" stroke="#3f86b0" /><path d="M9 1l5 5M14 1L9 6" stroke="#c0392b" strokeWidth="1.6" /><path d="M10 8v7l2-2h2z" fill="#fff" /></Sm></Slot>
    <Slot w={26}><Sm><path d="M3 2h7v4H3zM3 8h7v3H3zM6 11v4" stroke="#b5743c" fill="#f3d3a8" /><path d="M10 8v7l2-2h2z" fill="#fff" /></Sm></Slot>
    <Slot w={26}><Sm><path d="M2 5l6-3v10l-6 3z" stroke="#3f86b0" fill="#d8ecf7" /><path d="M9 1l5 5M14 1L9 6" stroke="#c0392b" strokeWidth="1.6" /><path d="M10 8v7l2-2h2z" fill="#fff" /></Sm></Slot>
    <Slot w={26}><Sm><path d="M5 1v8M1 5h8M3 3L5 1l2 2M3 7l2 2 2-2" stroke="#222" /><path d="M9 7v8l2-2h3z" fill="#fff" /></Sm></Slot>
    <Slot w={24}><Sm><circle cx="8" cy="8" r="5" stroke="#b0b0b0" strokeWidth="2.5" /></Sm></Slot>
    <Slot w={24}><Funnel size={17} color="#444" /></Slot>
    <span className="-ml-[3px] text-[11px] font-['Liberation_Sans',sans-serif] font-bold">:0</span>
  </div>
);

const Active = ({ children }: { children: ReactNode }) => (
  <div className="w-[24px] h-[18px] shrink-0 bg-[#cfcdd2] rounded-b-[3px] flex items-center justify-center">{children}</div>
);

const DocBar = () => (
  <div className="h-[20px] bg-[#f5f4f8] flex items-start text-[#777] overflow-hidden">
    <div className="w-[5px] shrink-0" />
    <Slot w={20}><Sm><path d="M4 1v10M12 1L7 6l5 5" stroke="#777" /></Sm></Slot>
    <Slot w={28}><ChevronLeft size={15} color="#777" /></Slot>
    <div className="w-[8px] shrink-0" />
    <div className="w-[109px] h-[14px] shrink-0 bg-white flex items-center justify-center text-[14px] leading-none text-[#666] font-['Liberation_Sans',sans-serif]">8<span className="text-[#bbb]">/9</span></div>
    <div className="w-[9px] shrink-0" />
    <Slot w={28}><ChevronRight size={15} color="#777" /></Slot>
    <Slot w={18}><Sm><path d="M12 1v10M4 1l5 5-5 5" stroke="#777" /></Sm></Slot>
    <div className="w-[15px] shrink-0" />
    <div className="w-[1px] h-[16px] bg-[#ddd] shrink-0" />
    <div className="w-[13px] shrink-0" />
    <Slot w={18}><Sm><rect x="2" y="0" width="12" height="13" fill="#fff" stroke="#666" /><path d="M11 6H5M7 4L5 6l2 2" stroke="#666" /></Sm></Slot>
    <div className="w-[5px] shrink-0" />
    <Slot w={18}><Sm><rect x="2" y="0" width="12" height="13" stroke="#bbb" /><path d="M5 6h6M9 4l2 2-2 2" stroke="#bbb" /></Sm></Slot>
    <div className="w-[666px] shrink-0" />
    <Slot w={22}><Eye size={17} color="#666" /></Slot>
    <div className="w-[22px] shrink-0" />
    <Active><Sm><path d="M2 2h12M3 6h10v9M3 6v9" stroke="#555" /></Sm></Active>
    <div className="w-[21px] shrink-0" />
    <Active><Sm><rect x="3" y="1" width="10" height="13" stroke="#555" /><path d="M6 6h4" stroke="#555" /></Sm></Active>
    <Slot w={26}><Sm><rect x="1" y="0" width="6" height="13" stroke="#555" /><rect x="9" y="0" width="6" height="13" stroke="#555" /></Sm></Slot>
    <div className="w-[21px] shrink-0" />
    <Slot w={22}><Sm><circle cx="8" cy="6" r="7" stroke="#666" /><path d="M6 2l5 4-5 4z" stroke="#666" /></Sm></Slot>
    <div className="w-[23px] shrink-0" />
    <Active><Sm><rect x="2" y="1" width="12" height="13" stroke="#555" /><path d="M5 4v6M11 4v6M8 5v1M8 8v1" stroke="#555" /></Sm></Active>
    <div className="w-[2px] shrink-0" />
    <Slot w={24}><Sm><path d="M4 0v10h9V0M1 12h3M13 12h2" stroke="#555" /></Sm></Slot>
    <Slot w={28}><Sm><path d="M3 0v8M13 0v8M3 11h10M5 9l-2 2 2 2M11 9l2 2-2 2" stroke="#555" /></Sm></Slot>
    <span className="w-[32px] shrink-0 text-[13px] leading-[13px] -ml-[1px] text-[#999] font-['Liberation_Sans',sans-serif]">100%</span>
    <div className="w-[3px] shrink-0" />
    <div className="mt-[5px] shrink-0"><Caret /></div>
    <div className="w-[12px] shrink-0" />
    <div className="w-[10px] h-[2px] mt-[6px] bg-[#333] shrink-0" />
    <div className="w-[11px] shrink-0" />
    <div className="w-[122px] shrink-0 relative mt-[6px] h-[1px] bg-[#888]">
      <div className="absolute left-[63px] -top-[6px] w-[12px] h-[12px] rounded-full bg-white border border-[#555]" />
    </div>
  </div>
);

const under = "absolute bottom-0 left-[8px] right-[8px] h-[2px] bg-[#a8a8a8]";

const Task = ({ w = 49, on, children, active }: { w?: number; on?: boolean; active?: boolean; children: ReactNode }) => (
  <div className={`relative h-full flex items-center justify-center shrink-0 ${active ? "bg-[#3a3a3a]" : ""}`} style={{ width: w }}>
    {children}
    {on && <div className={under} />}
  </div>
);

const Taskbar = () => (
  <div className="h-[40px] bg-[#101010] flex items-center">
    <div className="w-[16px] shrink-0" />
    <Task>
      <svg width="16" height="18" viewBox="0 0 16 18" fill="none" stroke="#e8e8e8" strokeWidth="1.2">
        <path d="M1 2h9M1 16h9M1 6h9v6H1z" /><path d="M14 2v3M14 7v3M14 13v3" />
      </svg>
    </Task>
    <div className="w-[2px] shrink-0" />
    <Task>
      <svg width="26" height="30" viewBox="0 0 26 30" fill="none"><circle cx="15" cy="11" r="7.5" stroke="#ef7d21" strokeWidth="4" /><path d="M10 17L3 27" stroke="#ef7d21" strokeWidth="4.5" strokeLinecap="round" /></svg>
    </Task>
    <Task on>
      <svg width="24" height="22" viewBox="0 0 24 22"><path d="M1 3h9l2 2h11v16H1z" fill="#f3d27a" /><path d="M1 8h22v13H1z" fill="#fbe8a8" /><path d="M7 14h10v7H7z" fill="#4aa0c8" /></svg>
    </Task>
    <Task>
      <svg width="26" height="26" viewBox="0 0 26 26">
        <path d="M13 1a12 12 0 0 1 12 12H13z" fill="#f0883a" /><path d="M25 13a12 12 0 0 1-12 12V13z" fill="#e94f8a" />
        <path d="M13 25A12 12 0 0 1 1 13h12z" fill="#3fb76b" /><path d="M1 13A12 12 0 0 1 13 1v12z" fill="#3d8fe0" /><circle cx="13" cy="13" r="4.5" fill="#dff1d0" />
      </svg>
    </Task>
    <Task>
      <div className="w-[24px] h-[30px] bg-[#2e6fb5] border border-[#7fa8d4] flex items-center justify-center text-[10px] font-bold leading-none text-[#cfe0f2] font-['Liberation_Sans',sans-serif]">CAD</div>
    </Task>
    <Task on>
      <svg width="20" height="28" viewBox="0 0 20 28" fill="none"><rect x="5" y="1" width="10" height="17" rx="5" fill="#ef7d21" /><path d="M2 13c0 6 4 9 8 9s8-3 8-9M10 22v4M5 27h10" stroke="#c96a1b" strokeWidth="2" /></svg>
    </Task>
    <Task on>
      <div className="w-[22px] h-[22px] rounded-[4px] bg-[#1f6fd6] flex items-center justify-center text-[14px] font-bold leading-none text-white font-['Liberation_Sans',sans-serif]">W</div>
    </Task>
    <Task active on>
      <div className="w-[24px] h-[24px] bg-[#f2f5f8] flex items-center justify-center text-[21px] font-bold leading-none text-[#2e5f8e] font-['Liberation_Sans',sans-serif]">R</div>
    </Task>
    <div className="flex-1" />
    <div className="flex items-center">
      <Slot w={28}><ChevronUp size={16} color="#e8e8e8" /></Slot>
      <Slot w={22}><div className="w-[15px] h-[15px] rounded-[3px] bg-[#3aa24a] flex items-center justify-center"><div className="w-[8px] h-[8px] bg-[#26304f]" /></div></Slot>
      <Slot w={26}><svg width="10" height="16" viewBox="0 0 10 16"><rect x="2" y="0" width="6" height="10" rx="3" fill="#ef7d21" /><path d="M5 10v4M2 15h6" stroke="#ef7d21" strokeWidth="1.5" /></svg></Slot>
      <Slot w={20}><svg width="16" height="12" viewBox="0 0 16 12" fill="none" stroke="#eee"><rect x="4" y="2" width="11" height="8" /><path d="M1 4h3M1 8h3M2 1v3" /></svg></Slot>
      <Slot w={30}><div className="w-[11px] h-[18px] rounded-[5px] bg-[#1e88e5] flex items-center justify-center"><Bluetooth size={10} color="#fff" /></div></Slot>
      <Slot w={20}><Wifi size={15} color="#ddd" /></Slot>
      <Slot w={20}><Volume2 size={15} color="#ddd" /></Slot>
    </div>
  </div>
);

export default function App() {
  return (
    <div className="relative w-[1440px] h-[900px] overflow-hidden flex flex-col bg-[#f5f4f8] text-[12px] font-['Noto_Sans_CJK_SC','Liberation_Sans',sans-serif]">
      <TitleBar />
      <Tabs />
      <Ribbon />
      <div className="h-[24px] bg-[#faf8fa] shrink-0" />
      <div className="h-[641px] flex shrink-0">
        <div className="w-[222px] shrink-0 flex flex-col">
          <Properties />
          <Browser />
        </div>
        <div className="w-[6px] shrink-0" />
        <div className="flex-1 flex flex-col border-l-2 border-t-2 border-[#777] min-w-0">
          <div className="relative flex-1 bg-white overflow-hidden">
            <Building />
            <Cube />
            <div className="absolute right-0 top-[14px] w-[10px] h-[4px] border border-[#777] bg-white" />
          </div>
          <ViewBar />
        </div>
      </div>
      <StatusBar />
      <DocBar />
      <Taskbar />
      <div className="absolute left-[222px] top-[695px] text-[30px] leading-[44px] tracking-[1.2px] text-[#c6161f] whitespace-nowrap font-['Liberation_Serif','Noto_Sans_CJK_SC',serif]">公众号：BIM志</div>
    </div>
  );
}
